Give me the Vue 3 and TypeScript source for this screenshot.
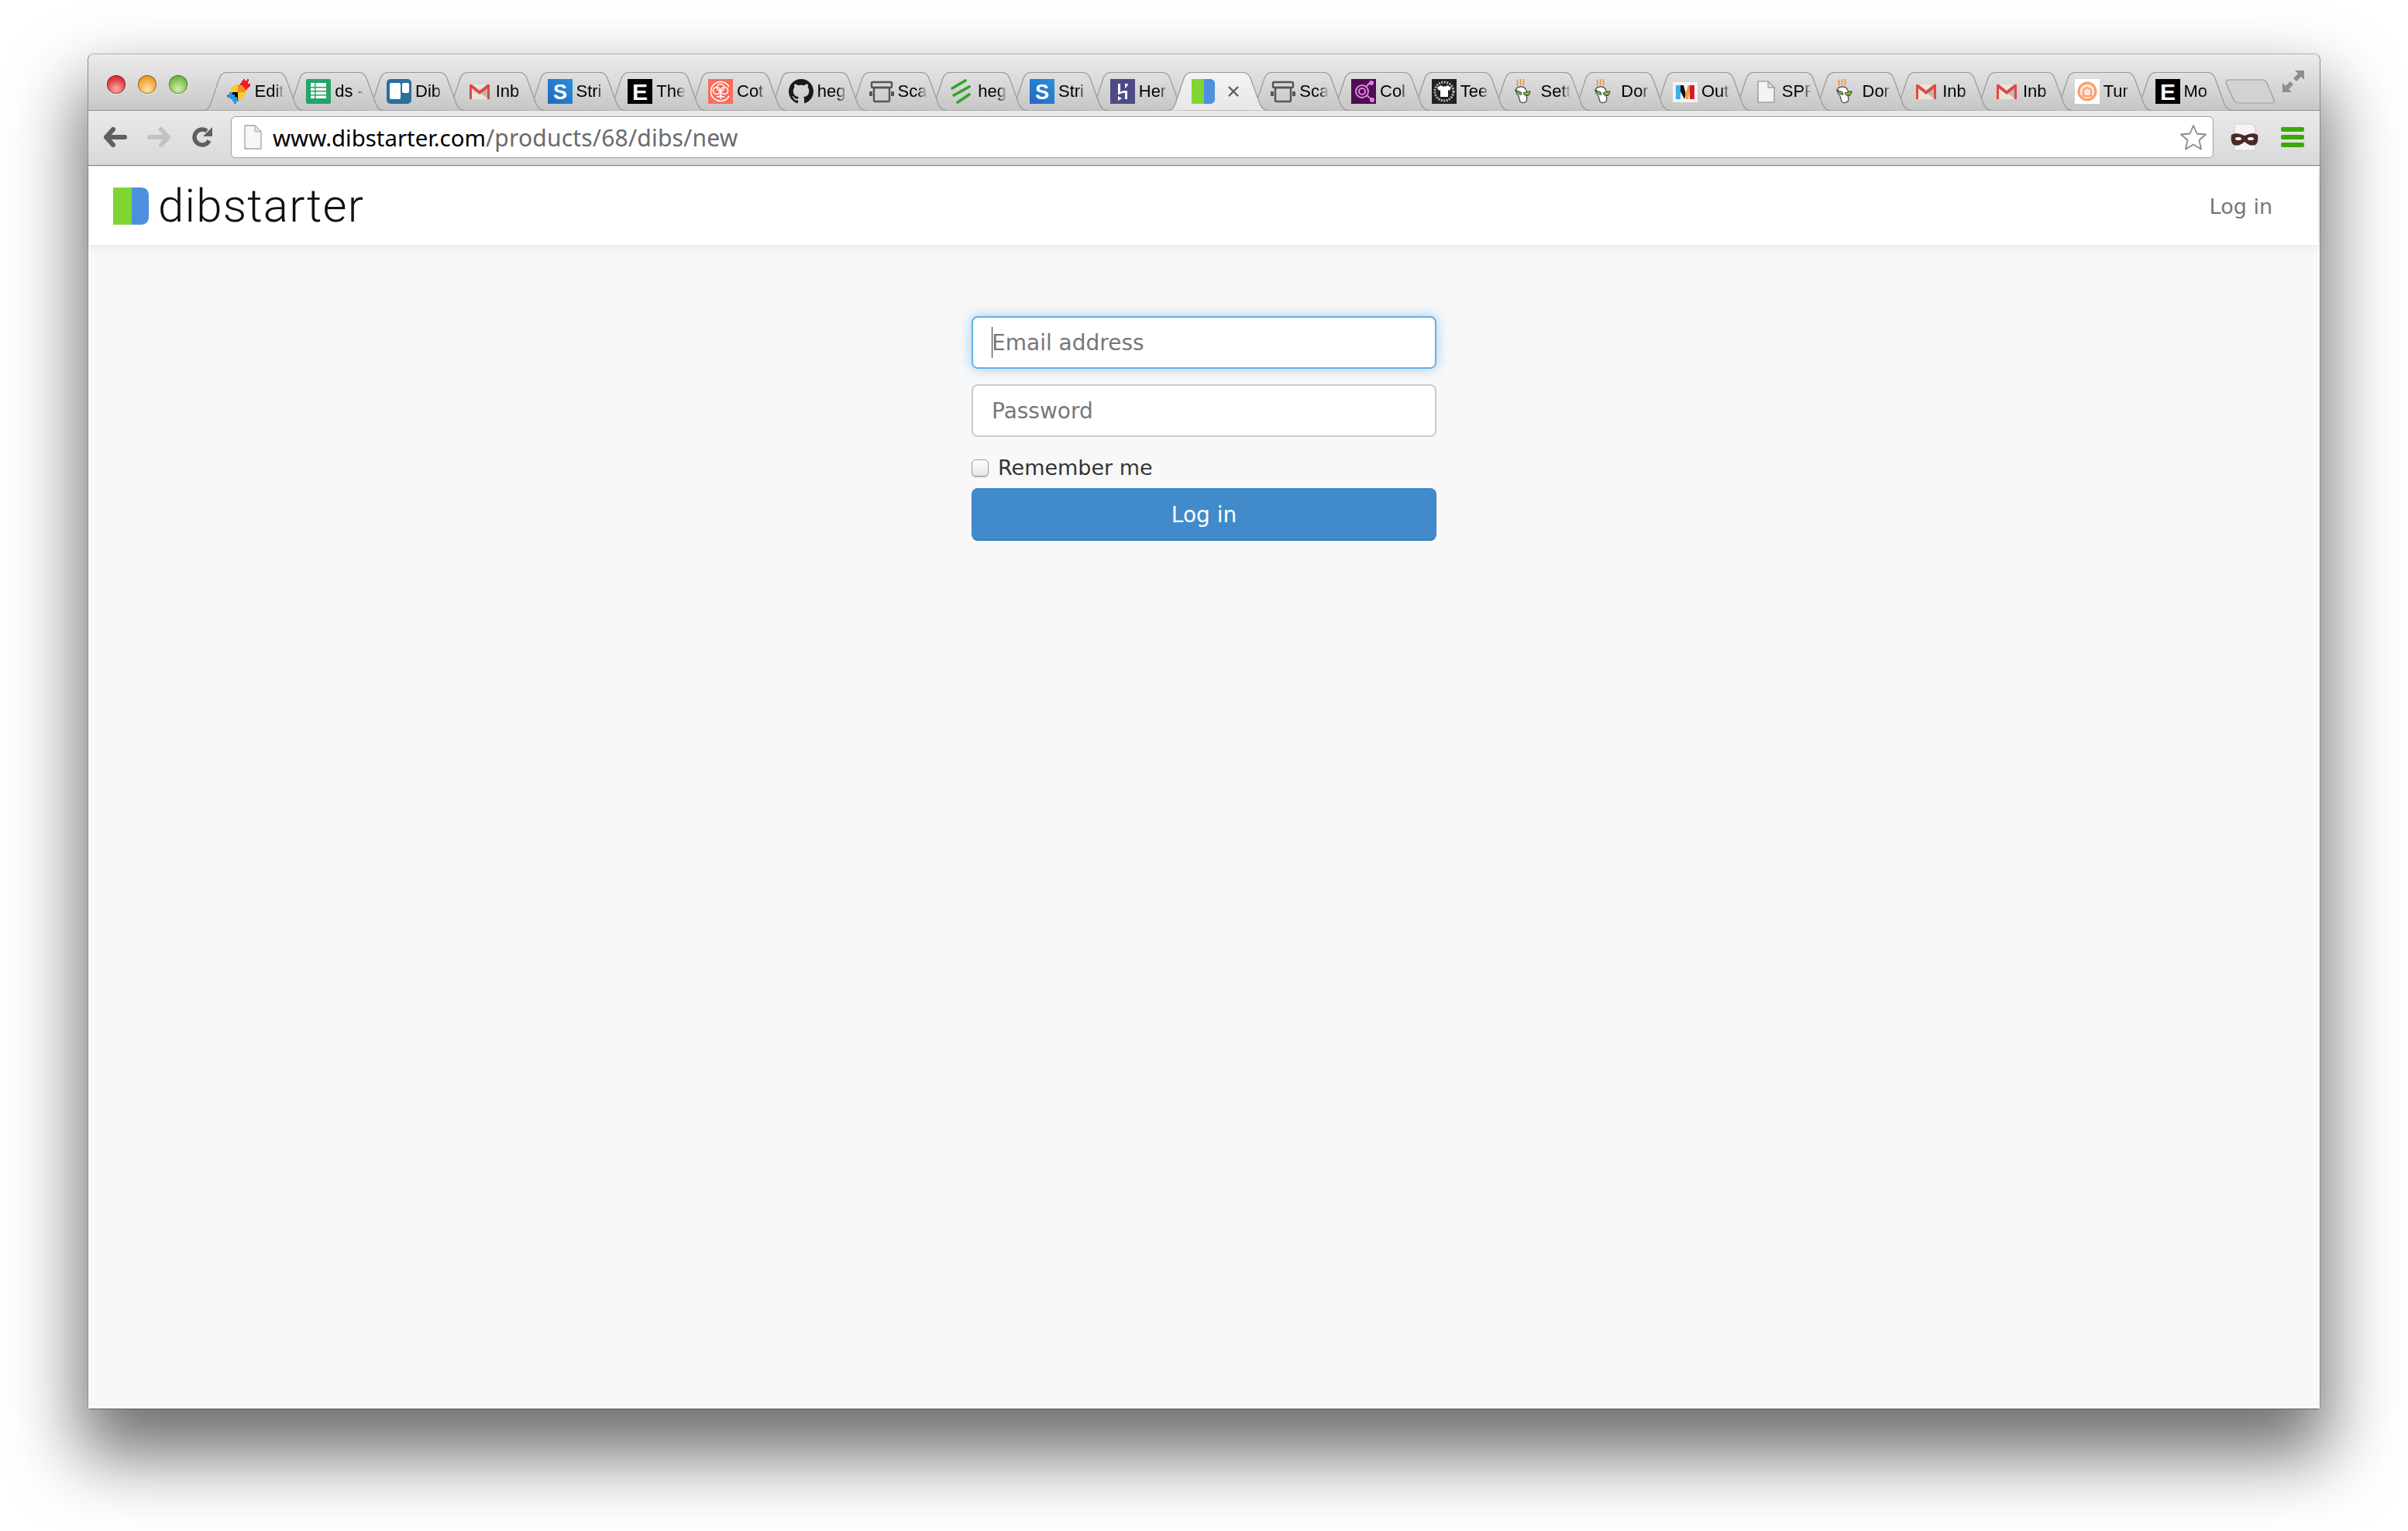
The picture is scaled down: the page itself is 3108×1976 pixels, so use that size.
<script setup lang="ts">
interface Tab {
  title: string
  icon: string
  active?: boolean
}

const names: [string, string][] = [
  ['Edit', 'edit'], ['ds -', 'sheets'], ['Dib', 'trello'], ['Inb', 'gmail'], ['Stri', 'stripe'],
  ['The', 'e'], ['Cot', 'cotton'], ['heg', 'github'], ['Sca', 'scale'], ['heg', 'green'],
  ['Stri', 'stripe'], ['Her', 'heroku'], ['', 'dib'], ['Sca', 'scale'], ['Col', 'color'],
  ['Tee', 'tee'], ['Sett', 'godaddy'], ['Dor', 'godaddy'], ['Out', 'out'], ['SPF', 'doc'],
  ['Dor', 'godaddy'], ['Inb', 'gmail'], ['Inb', 'gmail'], ['Tur', 'turn'], ['Mo', 'e']
]

const tabs: Tab[] = names.map(([title, icon]) => ({ title, icon, active: icon === 'dib' }))
const tabLayer = (tab: Tab, i: number) => (tab.active ? 50 : 40 - i)
</script>

<template>
  <div class="desktop">
    <div class="window">
      <svg class="defs" width="0" height="0" aria-hidden="true">
        <defs>
          <linearGradient id="tabFill" x1="0" y1="0" x2="0" y2="1">
            <stop offset="0" stop-color="#e0e0e0" />
            <stop offset="1" stop-color="#c6c6c6" />
          </linearGradient>
          <linearGradient id="tabActive" x1="0" y1="0" x2="0" y2="1">
            <stop offset="0" stop-color="#f3f3f3" />
            <stop offset="1" stop-color="#e7e7e7" />
          </linearGradient>
          <linearGradient id="stripeFill" x1="0" y1="1" x2="1" y2="0">
            <stop offset="0" stop-color="#2268c0" />
            <stop offset="1" stop-color="#2b8fd8" />
          </linearGradient>
        </defs>
      </svg>

      <header class="titlebar">
        <div class="lights">
          <span class="light red"></span>
          <span class="light orange"></span>
          <span class="light green"></span>
        </div>
        <div class="tabs">
          <div
            v-for="(tab, i) in tabs"
            :key="i"
            class="tab"
            :class="{ active: tab.active }"
            :style="{ zIndex: tabLayer(tab, i) }"
          >
            <svg class="tab-shape" width="130" height="50" viewBox="0 0 130 50" aria-hidden="true">
              <path
                d="M0 49.5C6 49.5 8 46 10 41L21 8C23 3 26 .5 31 .5H97C102 .5 105 3 107 8L119 41C121 46 124 49.5 130 49.5Z"
                :fill="tab.active ? 'url(#tabActive)' : 'url(#tabFill)'"
                stroke="none"
              />
              <path
                d="M0 49.5C6 49.5 8 46 10 41L21 8C23 3 26 .5 31 .5H97C102 .5 105 3 107 8L119 41C121 46 124 49.5 130 49.5"
                fill="none"
                stroke="#999"
                stroke-width="1.2"
              />
            </svg>
            <svg class="fav" width="32" height="32" viewBox="0 0 32 32" aria-hidden="true">
              <template v-if="tab.icon === 'edit'">
                <path fill="#f21d24" d="M22 0h2v2h3V0h2v3h-1v3h3v4h-2v2h-2v2h-3v-2h-4V8h-2V5h2V2h2z" />
                <circle cx="15" cy="17" r="10" fill="#fbc82e" />
                <path fill="#f58a26" d="M15 17V7a10 10 0 0 1 10 10z" />
                <path fill="#050505" d="M15 17H5a10 10 0 0 0 10 10z" />
                <path fill="#2a96dc" d="M4 17h4v3h3v3h3v3h2v3h-3v3h-3v-3H8v-3H5v-2H1v-4h3z" />
              </template>
              <template v-else-if="tab.icon === 'sheets'">
                <rect width="32" height="32" rx="2" fill="#23a566" />
                <rect x="6" y="5" width="20" height="20" fill="#fff" />
                <path fill="#23a566" d="M11 5h1.5v20H11zM6 10h20v1.6H6zM6 15h20v1.6H6zM6 20h20v1.6H6z" />
              </template>
              <template v-else-if="tab.icon === 'trello'">
                <rect width="32" height="32" rx="5" fill="#2a6f9e" />
                <rect x="4" y="5" width="14" height="21" rx="2" fill="#fff" />
                <rect x="20" y="5" width="9" height="13" rx="2" fill="#fff" />
              </template>
              <template v-else-if="tab.icon === 'gmail'">
                <rect x="3" y="7" width="26" height="19" fill="#e9e5da" />
                <path fill="#bcb9ae" d="M16 17 27 26V10z" />
                <path fill="#dd4b43" d="M3 7h3l10 8 10-8h3v19h-3V12L16 20 6 12v14H3z" />
              </template>
              <template v-else-if="tab.icon === 'stripe'">
                <rect width="32" height="32" fill="url(#stripeFill)" />
                <text x="16" y="26" class="glyph" font-size="27" fill="#fff">S</text>
              </template>
              <template v-else-if="tab.icon === 'e'">
                <rect width="32" height="32" fill="#000" />
                <text x="16" y="27" class="glyph" font-size="30" fill="#fff">E</text>
              </template>
              <template v-else-if="tab.icon === 'cotton'">
                <rect width="32" height="32" fill="#fa6c5b" />
                <g fill="none" stroke="#fff" stroke-width="1.6">
                  <path d="M27 10A12.5 12.5 0 1 0 27 22" />
                  <circle cx="16" cy="11" r="4.5" />
                  <circle cx="11" cy="15" r="4.5" />
                  <circle cx="21" cy="15" r="4.5" />
                  <path d="M16 14V26M11 23c3 0 5-1 5-3 0 2 2 3 5 3" />
                </g>
              </template>
              <template v-else-if="tab.icon === 'github'">
                <path
                  transform="scale(2)"
                  fill="#1a1a1a"
                  d="M8 0C3.58 0 0 3.58 0 8c0 3.54 2.29 6.53 5.47 7.59.4.07.55-.17.55-.38 0-.19-.01-.82-.01-1.49-2.01.37-2.53-.49-2.69-.94-.09-.23-.48-.94-.82-1.13-.28-.15-.68-.52-.01-.53.63-.01 1.08.58 1.23.82.72 1.21 1.87.87 2.33.66.07-.52.28-.87.51-1.07-1.78-.2-3.64-.89-3.64-3.95 0-.87.31-1.59.82-2.15-.08-.2-.36-1.02.08-2.12 0 0 .67-.21 2.2.82.64-.18 1.32-.27 2-.27.68 0 1.36.09 2 .27 1.53-1.04 2.2-.82 2.2-.82.44 1.1.16 1.92.08 2.12.51.56.82 1.27.82 2.15 0 3.07-1.87 3.75-3.65 3.95.29.25.54.73.54 1.48 0 1.07-.01 1.93-.01 2.2 0 .21.15.46.55.38A8.013 8.013 0 0016 8c0-4.42-3.58-8-8-8z"
                />
              </template>
              <template v-else-if="tab.icon === 'scale'">
                <g fill="none" stroke="#555" stroke-width="2.4">
                  <rect x="3" y="4" width="26" height="7" rx="1.5" />
                  <rect x="6" y="11" width="20" height="18" rx="1.5" />
                </g>
                <path fill="#555" d="M0 16h4v6H0zM28 16h4v6h-4z" />
              </template>
              <template v-else-if="tab.icon === 'green'">
                <g stroke="#2fa62a" stroke-width="3.6" stroke-linecap="round">
                  <path d="M4 12 21 2M6 21 26 10M11 30 26 20" />
                </g>
              </template>
              <template v-else-if="tab.icon === 'heroku'">
                <rect width="32" height="32" fill="#4c4b85" />
                <path fill="#fff" d="M10 6h3v11c3-2 6-2.500 9-1.500V26h-3v-8c-2-.5-5 .5-9 2.500zM19 6h4c-.5 2.500-2 4.500-4 6zM10 22l5 3-5 3z" />
              </template>
              <template v-else-if="tab.icon === 'dib'">
                <rect width="16" height="32" fill="#7fd531" />
                <path fill="#4d90e0" d="M16 0h8c3.500 0 6 2.500 6 6v20c0 3.500-2.500 6-6 6h-8z" />
              </template>
              <template v-else-if="tab.icon === 'color'">
                <rect width="32" height="32" fill="#4c0f50" />
                <g fill="none" stroke="#e680e6" stroke-width="2">
                  <circle cx="14" cy="16" r="8" />
                  <circle cx="14" cy="16" r="4" />
                  <path d="M19 10 24 5M20 21l6 5" />
                  <circle cx="26" cy="5" r="2" fill="#e680e6" />
                  <circle cx="27" cy="27" r="2" fill="#e680e6" />
                </g>
              </template>
              <template v-else-if="tab.icon === 'tee'">
                <rect width="32" height="32" fill="#222" />
                <circle cx="16" cy="16" r="12" fill="none" stroke="#bbb" stroke-width="3" stroke-dasharray="2 1.500" />
                <path fill="#fff" d="M12 8l-5 3 2 4 2-1v9h10v-9l2 1 2-4-5-3c-1 2-7 2-8 0z" />
              </template>
              <template v-else-if="tab.icon === 'godaddy'">
                <g fill="none" stroke="#f08a24" stroke-width="1.500">
                  <path d="M7 9C5 6 8 4 6 1M11 8C9 5 12 4 10 0M15 8c-2-3 1-4-1-8" />
                </g>
                <path fill="#fff" stroke="#3c3c3c" stroke-width="1.100" d="M5 12c4-3 10-3 12 1l2 4 1 4-2 1 1 3-1 4-5 2-3-2-2-7-3-4z" />
                <path fill="#7ec636" stroke="#333" stroke-width="1" d="M3 14l8 3 1 3H9l-2-2zM14 18l7-2h2v1l-2 4h-5z" />
              </template>
              <template v-else-if="tab.icon === 'out'">
                <rect y="4" width="32" height="26" fill="#f4f4f4" />
                <rect x="4" y="8" width="6" height="18" fill="#35b3e5" />
                <rect x="22" y="8" width="6" height="18" fill="#d9182d" />
                <path fill="#111" d="M10 8h4l3 12-2 6-5-10z" />
                <path fill="#f79b3a" d="M22 8h-2l-4 12 1 6h3l2-10z" />
              </template>
              <template v-else-if="tab.icon === 'doc'">
                <path fill="#f3f3f3" stroke="#8a8a8a" stroke-width="1.200" d="M6 3h13l8 8v19H6z" />
                <path fill="#dcdcdc" stroke="#8a8a8a" stroke-width="1" d="M19 3v8h8z" />
              </template>
              <template v-else-if="tab.icon === 'turn'">
                <rect width="32" height="32" fill="#fff" />
                <circle cx="16" cy="16" r="11" fill="#ffe5d6" stroke="#fd9a6c" stroke-width="3" />
                <path fill="none" stroke="#fd9a6c" stroke-width="2" d="M11 22v-8l5-3 5 3v8z" />
              </template>
            </svg>
            <span v-if="tab.title" class="tab-title">{{ tab.title }}</span>
            <svg v-else class="tab-close" width="16" height="16" viewBox="0 0 16 16" aria-hidden="true">
              <path d="M2 2 14 14M14 2 2 14" stroke="#5c5c5c" stroke-width="2.400" />
            </svg>
          </div>
          <svg class="new-tab" width="64" height="32" viewBox="0 0 64 32" aria-hidden="true">
            <path
              d="M1 5C1 2 3 1 5 1H48C51 1 53 3 54 5L63 27C64 30 62 31 60 31H18C15 31 13 30 11 27z"
              fill="#d2d2d2"
              stroke="#9a9a9a"
              stroke-width="1.200"
            />
          </svg>
          <svg class="fullscreen" width="28" height="28" viewBox="0 0 28 28" aria-hidden="true">
            <path fill="#8e8e8e" d="M16 0H28V12L24 8 18 14 14 10 20 4zM0 16V28H12L8 24 14 18 10 14 4 20z" />
          </svg>
        </div>
      </header>

      <div class="toolbar">
        <svg class="nav-icon back" width="32" height="28" viewBox="0 0 32 28" aria-hidden="true">
          <path d="M13 4 4 14 13 24M4 14H28" fill="none" stroke="#5f5f5f" stroke-width="6" stroke-linecap="round" stroke-linejoin="round" />
        </svg>
        <svg class="nav-icon forward" width="32" height="28" viewBox="0 0 32 28" aria-hidden="true">
          <path d="M19 4 28 14 19 24M28 14H4" fill="none" stroke="#c2c2c2" stroke-width="6" stroke-linecap="round" stroke-linejoin="round" />
        </svg>
        <svg class="nav-icon reload" width="28" height="28" viewBox="0 0 28 28" aria-hidden="true">
          <path d="M23 18.500A10 10 0 1 1 20 6" fill="none" stroke="#5f5f5f" stroke-width="5.500" />
          <path d="M27 1V13H15z" fill="#5f5f5f" />
        </svg>
        <div class="omnibox">
          <svg class="page-icon" width="24" height="32" viewBox="0 0 24 32" aria-hidden="true">
            <path fill="#f7f7f7" stroke="#a5a5a5" stroke-width="1.300" d="M2 1H15L23 9V31H2z" />
            <path fill="#e4e4e4" stroke="#a5a5a5" stroke-width="1" d="M15 1V9H23z" />
          </svg>
          <span class="url"><span class="url-host">www.dibstarter.com</span><span class="url-path">/products/68/dibs/new</span></span>
          <svg class="star" width="36" height="34" viewBox="0 0 36 34" aria-hidden="true">
            <path
              d="M18 2 22.500 12.500 34 13.500 25.500 21 28 32.500 18 26.500 8 32.500 10.500 21 2 13.500 13.500 12.500z"
              fill="#fff"
              stroke="#8a8a8a"
              stroke-width="1.800"
              stroke-linejoin="round"
            />
          </svg>
        </div>
        <svg class="incognito" width="36" height="36" viewBox="0 0 36 36" aria-hidden="true">
          <path fill="#f5f5f5" stroke="#d0d0d0" stroke-width="1" d="M5 1H27L32 6V35H5z" />
          <path fill="#4c2a28" d="M1 15c5-3 10-2 17 1 7-3 12-4 17-1 1 6 0 11-3 13-5 2-9 0-14-4-5 4-9 6-14 4-3-2-4-7-3-13z" />
          <ellipse cx="10" cy="20" rx="4" ry="2" fill="#fff" />
          <ellipse cx="26" cy="20" rx="4" ry="2" fill="#fff" />
        </svg>
        <div class="menu">
          <span></span>
          <span></span>
          <span></span>
        </div>
      </div>

      <div class="page">
        <nav class="navbar">
          <div class="brand">
            <svg class="brand-mark" width="46" height="48" viewBox="0 0 46 48" aria-hidden="true">
              <rect width="24" height="48" fill="#7fd531" />
              <path fill="#4d90e0" d="M24 0h12c6 0 10 4 10 10v28c0 6-4 10-10 10H24z" />
            </svg>
            <span class="brand-name">dibstarter</span>
          </div>
          <a class="nav-link">Log in</a>
        </nav>

        <main class="login">
          <form class="login-form" @submit.prevent>
            <div class="field">
              <input class="input focused" type="email" placeholder="Email address" />
              <span class="caret"></span>
            </div>
            <div class="field">
              <input class="input" type="password" placeholder="Password" />
            </div>
            <label class="remember">
              <input class="check" type="checkbox" />
              <span>Remember me</span>
            </label>
            <button class="submit" type="submit">Log in</button>
          </form>
        </main>
      </div>
    </div>
  </div>
</template>

<style>
html,
body {
  margin: 0;
  background: #fff;
}
</style>

<style scoped>
.desktop {
  box-sizing: border-box;
  width: 3108px;
  height: 1976px;
  padding: 69px 0 0 113px;
  overflow: hidden;
  background: #fff;
}
.window {
  box-sizing: border-box;
  width: 2882px;
  height: 1750px;
  display: flex;
  flex-direction: column;
  border: 1px solid #8b8b8b;
  border-top-color: #b0b0b0;
  border-bottom-color: #5a5a5a;
  border-radius: 8px 8px 4px 4px;
  background: #f8f8f8;
  box-shadow: 0 50px 90px 10px rgba(0, 0, 0, 0.56);
}
.defs {
  position: absolute;
}
.titlebar {
  flex: none;
  box-sizing: border-box;
  height: 73px;
  display: flex;
  border-bottom: 1px solid #8f8f8f;
  border-radius: 8px 8px 0 0;
  background: linear-gradient(#ececec, #c8c8c8);
}
.lights {
  flex: none;
  width: 148px;
  box-sizing: border-box;
  padding: 27px 0 0 24px;
  display: flex;
  gap: 16px;
  align-items: flex-start;
}
.light {
  width: 24px;
  height: 24px;
  border-radius: 50%;
  box-shadow: inset 0 0 0 1px rgba(0, 0, 0, 0.35), 0 1px 1px rgba(255, 255, 255, 0.6);
}
.red {
  background: radial-gradient(circle at 50% 75%, #ffb0b0, #e2393c 60%, #c42b2e);
}
.orange {
  background: radial-gradient(circle at 50% 75%, #ffe2a0, #f0a33a 60%, #c9831f);
}
.green {
  background: radial-gradient(circle at 50% 75%, #d4f0b0, #7fbf4f 60%, #5f9c38);
}
.tabs {
  display: flex;
  align-items: flex-start;
  padding-top: 23px;
}
.tab {
  flex: none;
  position: relative;
  box-sizing: border-box;
  width: 130px;
  height: 50px;
  margin-right: -26.25px;
  padding: 9px 0 0 29.500px;
  display: flex;
  align-items: flex-start;
}
.tab.active {
  padding-left: 31px;
}
.tab-shape {
  position: absolute;
  left: 0;
  top: 0;
}
.fav {
  flex: none;
  position: relative;
}
.glyph {
  font-family: "Liberation Sans", sans-serif;
  font-weight: 700;
  text-anchor: middle;
}
.tab-title {
  position: relative;
  width: 38px;
  margin-left: 5px;
  white-space: nowrap;
  font: 22px/32px "Liberation Sans", sans-serif;
  color: #000;
  -webkit-mask-image: linear-gradient(90deg, #000 68%, transparent 100%);
  mask-image: linear-gradient(90deg, #000 68%, transparent 100%);
}
.tab-close {
  position: relative;
  margin: 8px 0 0 14px;
}
.new-tab {
  flex: none;
  margin: 9px 0 0 16.500px;
}
.fullscreen {
  flex: none;
  margin: -2px 0 0 10px;
}
.toolbar {
  flex: none;
  box-sizing: border-box;
  height: 71px;
  display: flex;
  align-items: flex-start;
  border-bottom: 1px solid #7f7f7f;
  background: linear-gradient(#e9e9e9, #d9d9d9);
}
.nav-icon {
  flex: none;
  margin-top: 20px;
}
.back {
  margin-left: 19px;
}
.forward {
  margin-left: 24px;
}
.reload {
  margin-left: 26px;
}
.omnibox {
  flex: none;
  box-sizing: border-box;
  width: 2559px;
  height: 54px;
  margin: 7px 0 0 23px;
  padding: 0 7px 0 15px;
  display: flex;
  align-items: center;
  border: 1px solid #a0a0a0;
  border-radius: 6px;
  background: #fff;
}
.url {
  flex: 1;
  margin-left: 14px;
  font: 30px "Noto Sans", sans-serif;
  white-space: nowrap;
}
.url-host {
  font-size: 29.400px;
  color: #000;
}
.url-path {
  letter-spacing: 0.2px;
  color: #6b6b6b;
}
.incognito {
  flex: none;
  margin: 16px 0 0 22px;
}
.menu {
  flex: none;
  width: 30px;
  margin: 21px 0 0 29px;
  display: flex;
  flex-direction: column;
  gap: 4px;
}
.menu span {
  height: 6px;
  border-radius: 2px;
  background: #3fa70a;
}
.page {
  flex: 1;
  min-height: 0;
  padding-top: 2px;
  background: #f8f8f8;
}
.navbar {
  box-sizing: border-box;
  height: 100px;
  margin: 0 2px 0 1px;
  padding: 0 59px 0 31px;
  display: flex;
  align-items: center;
  justify-content: space-between;
  background: #fff;
  box-shadow: 0 2px 14px rgba(0, 0, 0, 0.08);
}
.brand {
  display: flex;
  align-items: center;
  gap: 12px;
}
.brand-name {
  font: 300 60px/1 Roboto, sans-serif;
  letter-spacing: 1.2px;
  color: #111;
}
.nav-link {
  font: 27px "DejaVu Sans", sans-serif;
  color: #777;
}
.login {
  padding-top: 92px;
  display: flex;
  justify-content: center;
}
.login-form {
  width: 600px;
  display: flex;
  flex-direction: column;
}
.field {
  position: relative;
  margin-bottom: 20px;
}
.input {
  box-sizing: border-box;
  display: block;
  width: 100%;
  height: 68px;
  padding: 0 24px;
  border: 2px solid #ccc;
  border-radius: 8px;
  outline: none;
  background: #fff;
  font: 28px "DejaVu Sans", sans-serif;
  color: #555;
}
.input::placeholder {
  color: #777;
  opacity: 1;
}
.focused {
  border-color: #66afe9;
  box-shadow: 0 0 16px rgba(102, 175, 233, 0.6);
}
.caret {
  position: absolute;
  left: 26px;
  top: 14px;
  width: 1px;
  height: 40px;
  background: #333;
}
.remember {
  height: 38px;
  margin-bottom: 8px;
  display: flex;
  align-items: center;
  gap: 12px;
  font: 27px "DejaVu Sans", sans-serif;
  color: #333;
}
.check {
  appearance: none;
  box-sizing: border-box;
  width: 22px;
  height: 22px;
  margin: 2px 0 0;
  border: 1px solid #9a9a9a;
  border-radius: 5px;
  background: linear-gradient(#fff, #e6e6e6);
  box-shadow: 0 1px 1px rgba(0, 0, 0, 0.25);
}
.submit {
  height: 68px;
  border: 2px solid #3f86c6;
  border-bottom-color: #357ebd;
  border-radius: 8px;
  background: #428bca;
  font: 28px "DejaVu Sans", sans-serif;
  color: #fff;
}
</style>
